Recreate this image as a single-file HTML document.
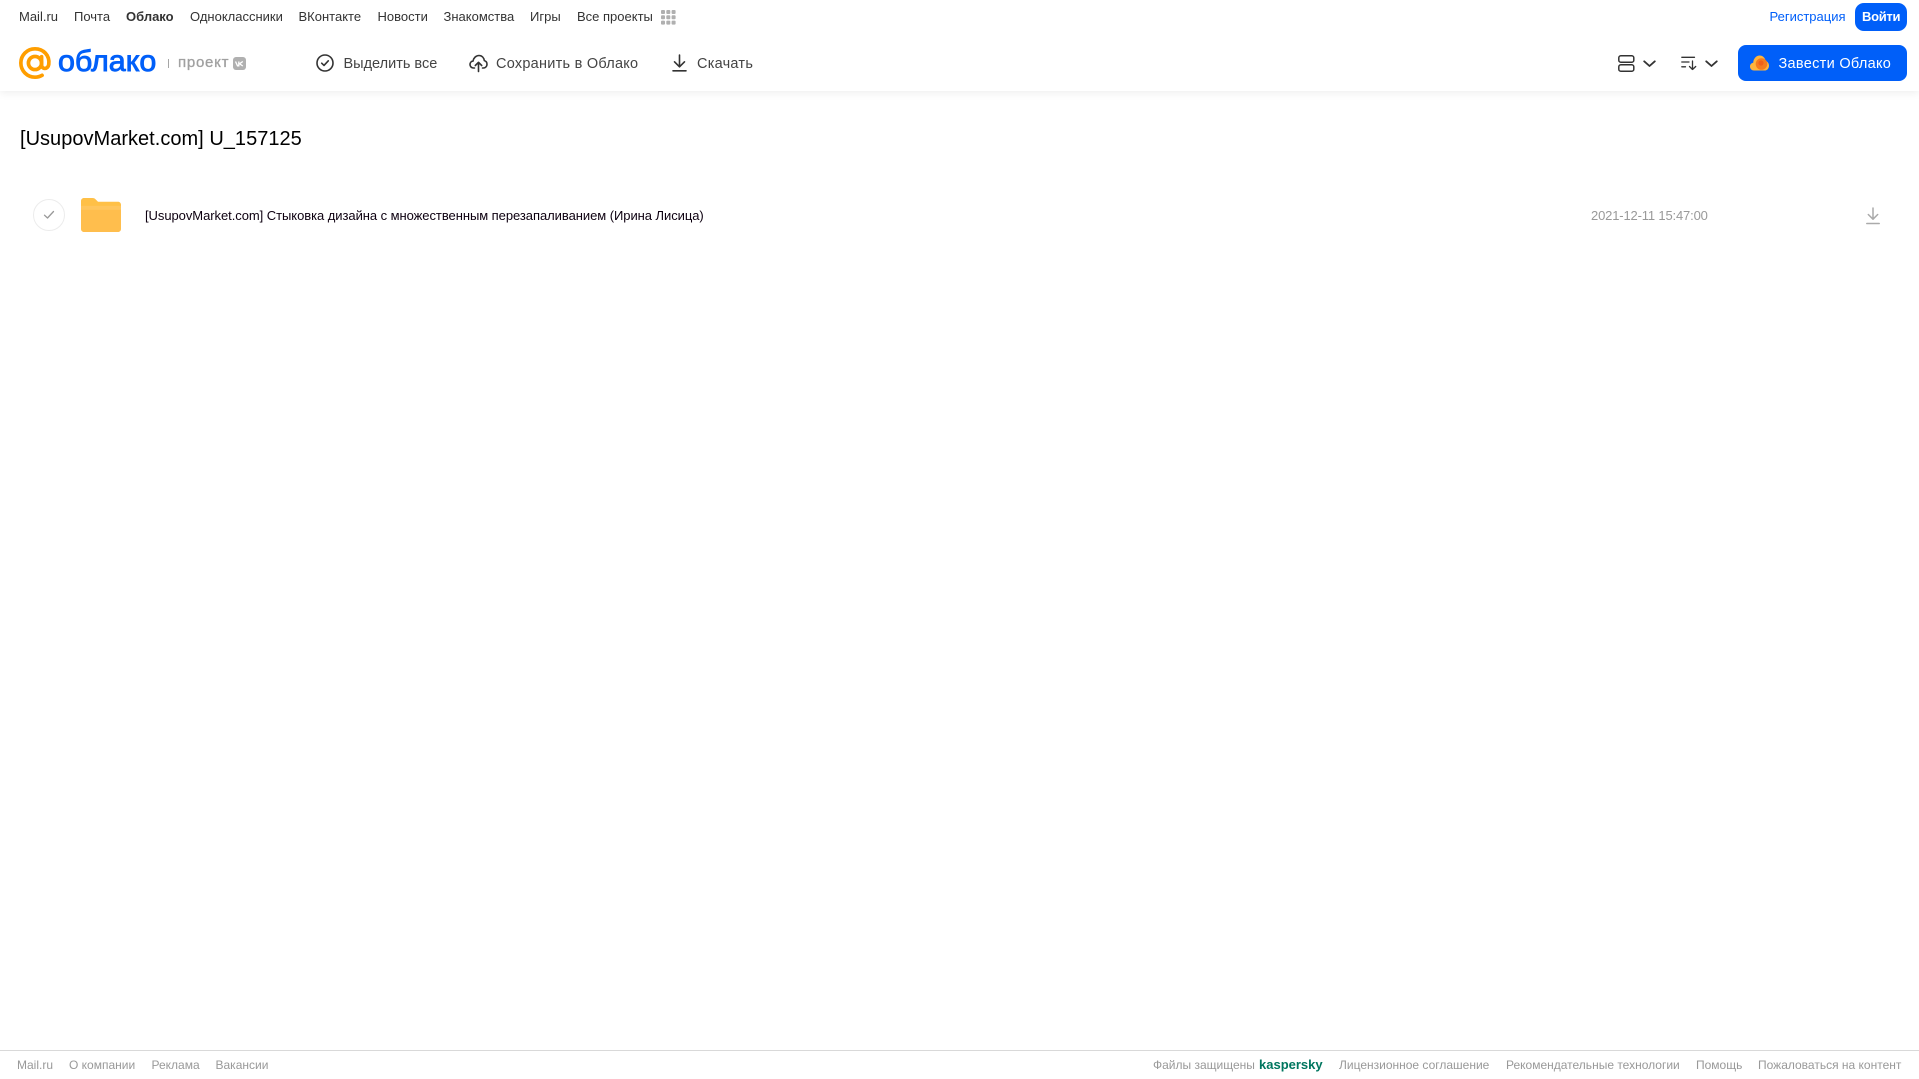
<!DOCTYPE html>
<html lang="ru">
<head>
<meta charset="utf-8">
<title>Облако</title>
<style>
html,body{margin:0;padding:0;background:#fff;}
body{width:1919px;height:1079px;position:relative;overflow:hidden;font-family:"Liberation Sans",sans-serif;}
.t{position:absolute;white-space:nowrap;line-height:20px;height:20px;}
.n{top:7px;font-size:13px;color:#333;}
.a{top:54px;font-size:14.5px;color:#444;letter-spacing:.25px;}
.f{top:1055px;font-size:12px;color:#999;}
svg{position:absolute;display:block;overflow:visible;}
#hdr{position:absolute;left:0;top:0;width:1919px;height:91px;background:#fff;box-shadow:0 2px 8px rgba(0,0,0,.07);}
</style>
</head>
<body>
<div id="hdr"></div>

<span class="t n" style="left:19px">Mail.ru</span>
<span class="t n" style="left:74px">Почта</span>
<span class="t n" style="left:126px;font-weight:700">Облако</span>
<span class="t n" style="left:190px">Одноклассники</span>
<span class="t n" style="left:298.500px">ВКонтакте</span>
<span class="t n" style="left:377.500px">Новости</span>
<span class="t n" style="left:443.500px">Знакомства</span>
<span class="t n" style="left:530px">Игры</span>
<span class="t n" style="left:577px">Все проекты</span>
<svg style="left:661px;top:10px" width="15" height="15" fill="#b0b0b0">
<rect x="0" y="0" width="4" height="4" rx="1"/><rect x="5.300" y="0" width="4" height="4" rx="1"/><rect x="10.600" y="0" width="4" height="4" rx="1"/>
<rect x="0" y="5.300" width="4" height="4" rx="1"/><rect x="5.300" y="5.300" width="4" height="4" rx="1"/><rect x="10.600" y="5.300" width="4" height="4" rx="1"/>
<rect x="0" y="10.600" width="4" height="4" rx="1"/><rect x="5.300" y="10.600" width="4" height="4" rx="1"/><rect x="10.600" y="10.600" width="4" height="4" rx="1"/>
</svg>

<span class="t" style="left:1769.500px;top:7px;font-size:13px;color:#005ff9">Регистрация</span>
<div style="position:absolute;left:1855px;top:3px;width:52px;height:28px;border-radius:9px;background:#005ff9"></div>
<span class="t" style="left:1862px;top:7px;font-size:13px;font-weight:700;color:#fff;letter-spacing:-.3px">Войти</span>

<svg style="left:19px;top:47px" width="32" height="32" viewBox="0 0 33 33" fill="none" stroke="#ff9e00" stroke-width="3.800" stroke-linecap="round">
<circle cx="16.500" cy="16.500" r="6.800"/>
<path d="M23.300 10v8.400c0 5 6.600 5 7.400-.4C32 8.500 25 1.900 16.500 1.900 8.400 1.900 1.900 8.400 1.900 16.500S8.400 31.100 16.500 31.100c2.800 0 5.200-.6 7.300-1.900"/>
</svg>
<span class="t" style="left:58px;top:46px;height:32px;line-height:32px;font-size:30px;color:#005ff9;-webkit-text-stroke:.9px #005ff9;transform:scaleX(1.015);transform-origin:0 50%">облако</span>
<div style="position:absolute;left:168px;top:59px;width:1px;height:9px;background:#a6a6a6"></div>
<span class="t" style="left:178px;top:53px;font-size:15px;color:#a0a0a0;letter-spacing:.75px;-webkit-text-stroke:.3px #a0a0a0">проект</span>
<div style="position:absolute;left:233px;top:57px;width:13px;height:13px;border-radius:3px;background:#b0b0b0"></div>
<svg style="left:233px;top:57px" width="13" height="13" fill="none" stroke="#fff" stroke-width="1.300"><path d="M2.500 4.500 4.500 8.800 5.800 8.800V4.500M9.800 4.500 6.500 6.800 9.800 9"/></svg>

<svg style="left:316px;top:54px" width="18" height="18" fill="none" stroke="#333" stroke-width="1.600" stroke-linecap="round" stroke-linejoin="round"><circle cx="9" cy="9" r="8"/><path d="M5.700 9.200 8 11.400 12.300 6.800"/></svg>
<span class="t a" style="left:343.500px;letter-spacing:0">Выделить все</span>

<svg style="left:469px;top:54px" width="19" height="18" fill="none" stroke="#333" stroke-width="1.600" stroke-linecap="round" stroke-linejoin="round"><path d="M5.500 14H4.500C2.500 14 1 12.500 1 10.500 1 8.700 2.300 7.300 4 7.100 4.500 4 7 1.500 10 1.500 13 1.500 15 3.800 15.300 6.600 17 7 18 8.500 18 10.200 18 12.300 16.500 14 14.500 14H13.500"/><path d="M9.500 17.500V8.500M6.300 11.500 9.500 8.300 12.700 11.500"/></svg>
<span class="t a" style="left:496px">Сохранить в Облако</span>

<svg style="left:671.500px;top:54px" width="15" height="18" fill="none" stroke="#333" stroke-width="1.600" stroke-linecap="round" stroke-linejoin="round"><path d="M7.500 1V12.500M2.500 7.800 7.500 12.800 12.500 7.800M1 16.800H14"/></svg>
<span class="t a" style="left:697px">Скачать</span>

<svg style="left:1618px;top:55px" width="17" height="17" fill="none" stroke="#333" stroke-width="1.500"><rect x=".8" y=".8" width="15" height="6.400" rx="2"/><rect x=".8" y="9.800" width="15" height="6.400" rx="2"/></svg>
<svg style="left:1643px;top:60px" width="13" height="8" fill="none" stroke="#333" stroke-width="1.800" stroke-linecap="round" stroke-linejoin="round"><path d="M1.200 1.300 6.500 6 11.800 1.300"/></svg>
<svg style="left:1681px;top:56px" width="16" height="15" fill="none" stroke="#333" stroke-width="1.300" stroke-linecap="round" stroke-linejoin="round"><path d="M.8 1.300H13.500M.8 6H8M.8 10.800H4.500M11.500 5V13.500M8.500 10.500 11.500 13.500 14.700 10.500"/></svg>
<svg style="left:1705px;top:60px" width="13" height="8" fill="none" stroke="#333" stroke-width="1.800" stroke-linecap="round" stroke-linejoin="round"><path d="M1.200 1.300 6.500 6 11.800 1.300"/></svg>

<div style="position:absolute;left:1738px;top:45px;width:169px;height:36px;border-radius:8px;background:#005ff9"></div>
<svg style="left:1750px;top:55px" width="19" height="16">
<path d="M4 15.500C1.800 15.500 0 13.800 0 11.500 0 9.500 1.300 8 3.200 7.700 3.500 3.500 6.300.5 9.700.5 12.700.5 15 2.700 15.500 5.700 17.500 6.300 19 8.300 19 10.700 19 13.500 17 15.500 14.500 15.500Z" fill="#ffb43c"/>
<circle cx="11.500" cy="9" r="5.800" fill="#f47b20"/>
<circle cx="11" cy="8" r="2.600" fill="#f0611a"/>
</svg>
<span class="t" style="left:1778.500px;top:53.500px;font-size:14.500px;color:#fff;letter-spacing:.3px">Завести Облако</span>

<span class="t" style="left:20px;top:126.500px;height:24px;line-height:24px;font-size:20px;color:#000;letter-spacing:.02px">[UsupovMarket.com] U_157125</span>

<div style="position:absolute;left:33px;top:199px;width:30px;height:30px;border:1px solid #ececec;border-radius:50%"></div>
<svg style="left:43px;top:210px" width="12" height="10" fill="none" stroke="#999" stroke-width="1.300" stroke-linecap="round" stroke-linejoin="round"><path d="M1.500 5.200 4.500 8 10.500 1.500"/></svg>

<svg style="left:81px;top:198px" width="40" height="34">
<path d="M0 3C0 1.300 1.300 0 3 0H11.500C13 0 14 .6 15 1.700L17 3.800H37C38.700 3.800 40 5.100 40 6.800V10H0Z" fill="#ffc047"/>
<path d="M0 8H37C38.700 8 40 9.300 40 11V31C40 32.700 38.700 34 37 34H3C1.300 34 0 32.700 0 31Z" fill="#ffbe4d"/>
<rect x="0" y="7.800" width="40" height="4" fill="#ffcb6b" opacity=".55"/>
</svg>

<span class="t" style="left:145px;top:206px;font-size:13px;color:#0d0010;letter-spacing:-.055px">[UsupovMarket.com] Стыковка дизайна с множественным перезапаливанием (Ирина Лисица)</span>
<span class="t" style="left:1591px;top:206px;font-size:13px;color:#999;letter-spacing:-.16px">2021-12-11 15:47:00</span>
<svg style="left:1866px;top:207px" width="14" height="18" fill="none" stroke="#aaa" stroke-width="1.500" stroke-linecap="round" stroke-linejoin="round"><path d="M7 1V12M2.300 7.500 7 12.200 11.700 7.500M.8 16.500H13.200"/></svg>

<div style="position:absolute;left:0;top:1050px;width:1919px;height:1px;background:#d9d9d9"></div>
<span class="t f" style="left:17px">Mail.ru</span>
<span class="t f" style="left:69px">О компании</span>
<span class="t f" style="left:151.500px">Реклама</span>
<span class="t f" style="left:215.500px">Вакансии</span>
<span class="t f" style="left:1153px">Файлы защищены</span>
<span class="t f" style="left:1259px;font-size:13px;font-weight:700;color:#00765f">kaspersky</span>
<span class="t f" style="left:1339px">Лицензионное соглашение</span>
<span class="t f" style="left:1506px">Рекомендательные технологии</span>
<span class="t f" style="left:1696px">Помощь</span>
<span class="t f" style="left:1758px">Пожаловаться на контент</span>
</body>
</html>
